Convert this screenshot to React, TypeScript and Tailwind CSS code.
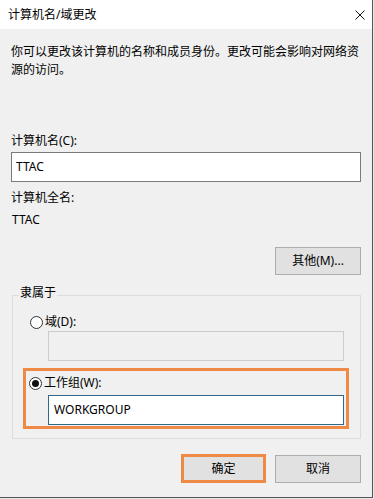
import React from 'react'

const FONT = "font-['Noto_Sans','Noto_Sans_CJK_SC',sans-serif]"

// Windows style radio button
function Radio({ checked, label }: { checked?: boolean; label: string }) {
  return (
    <div className="flex items-center h-[18px] leading-[18px]">
      <span className="w-[13px] h-[13px] rounded-full border border-[#333333] bg-white flex items-center justify-center">
        {checked && <span className="w-[7px] h-[7px] rounded-full bg-[#111111]" />}
      </span>
      <span className="ml-[2px]">{label}</span>
    </div>
  )
}

function WinButton({ children }: { children: React.ReactNode }) {
  return (
    <button
      type="button"
      className="w-[86px] h-[28px] bg-[#e1e1e1] border border-[#adadad] text-[12px] leading-[18px] text-black flex items-center justify-center"
    >
      {children}
    </button>
  )
}

export default function App() {
  return (
    <div className={`w-[374px] h-[499px] bg-[#e6e6e6] ${FONT} text-[12px] text-black`}>
      <div className="w-[373px] h-[498px] border-r border-b border-[#555555] flex flex-col bg-[#f0f0f0]">
        {/* Title bar */}
        <div className="h-[29px] bg-white flex items-center justify-between pl-[8px] pr-[7px] shrink-0">
          <span className="leading-[18px]">计算机名/域更改</span>
          <svg width="10" height="10" viewBox="0 0 10 10" className="mt-[0px]">
            <path d="M0.5 0.5 L9.5 9.5 M9.5 0.5 L0.5 9.5" stroke="#111" strokeWidth="1" fill="none" />
          </svg>
        </div>

        {/* Body */}
        <div className="flex flex-col px-[11px] pt-[14px]">
          <p className="leading-[18px]">
            你可以更改该计算机的名称和成员身份。更改可能会影响对网络资源的访问。
          </p>

          <div className="mt-[53px] leading-[18px]">计算机名(C):</div>
          <div className="mt-[2px] h-[30px] bg-white border border-[#7a7a7a] flex items-center px-[4px] leading-[18px]">
            TTAC
          </div>

          <div className="mt-[7px] leading-[18px]">计算机全名:</div>
          <div className="mt-[4px] leading-[18px] pl-[1px]">TTAC</div>

          <div className="mt-[18px] flex justify-end">
            <WinButton>其他(M)...</WinButton>
          </div>

          {/* Group box */}
          <fieldset className="mt-[9px] ml-[1px] border border-[#dcdcdc] pb-[9px]">
            <legend className="ml-[6px] px-[1px] leading-[18px] pb-[4px]">隶属于</legend>
            <div className="pt-[7px] pl-[17px]">
              <Radio label="域(D):" />
            </div>
            <div className="ml-[35px] w-[296px] h-[30px] bg-[#f0f0f0] border border-[#cccccc]" />

            <div className="mt-[7px] ml-[10px] w-[326px] border-[3px] border-[#ee8a45] pt-[3px] pl-[3px] pb-[1px]">
              <Radio checked label="工作组(W):" />
              <div className="mt-[3px] ml-[19px] w-[296px] h-[30px] bg-white border border-[#2f6a88] flex items-center px-[5px] leading-[18px]">
                WORKGROUP
              </div>
            </div>
          </fieldset>

          {/* Bottom buttons */}
          <div className="mt-[15px] flex justify-end items-start gap-[9px]">
            <div className="border-[3px] border-[#ee8a45] w-[85px] h-[29px] bg-[#e1e1e1] flex items-center justify-center leading-[18px]">
              确定
            </div>
            <div className="mt-[1px]">
              <WinButton>取消</WinButton>
            </div>
          </div>
        </div>
      </div>
    </div>
  )
}
